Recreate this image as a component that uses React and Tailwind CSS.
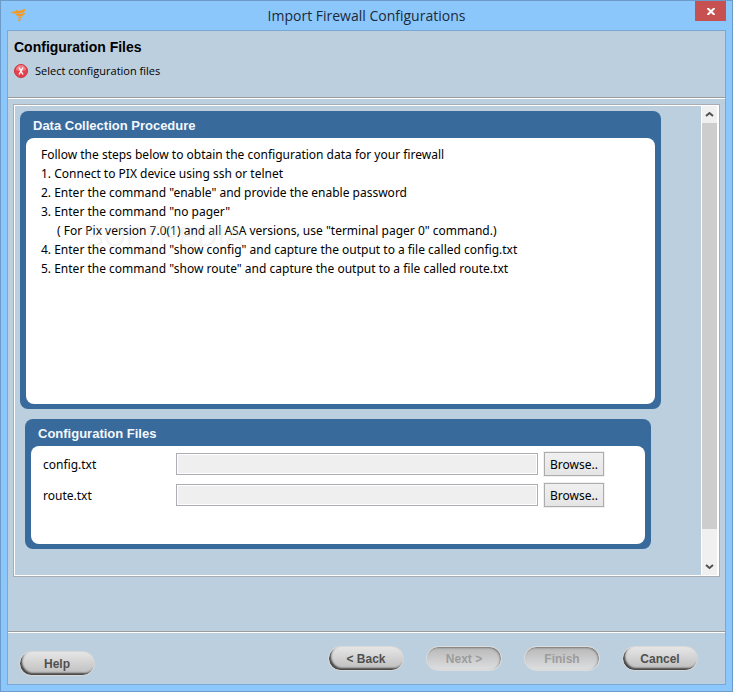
import { useState } from 'react'

const STEPS = [
    'Follow the steps below to obtain the configuration data for your firewall',
    '1. Connect to PIX device using ssh or telnet',
    '2. Enter the command "enable" and provide the enable password',
    '3. Enter the command "no pager"',
    '( For Pix version 7.0(1) and all ASA versions, use "terminal pager 0" command.)',
    '4. Enter the command "show config" and capture the output to a file called config.txt',
    '5. Enter the command "show route" and capture the output to a file called route.txt',
]

const FILES = ['config.txt', 'route.txt']

const Logo = () => (
    <svg width="16" height="13" viewBox="0 0 16 13" fill="#f7991c" className="mt-2 ml-[3px]">
        <path d="M0 3 L4 2.5 L6 2 L5 0.5 L9 2 L15 0 L15 2 L13 3.5 L9 4.5 L4 4.5 Z" />
        <path d="M5 5 L10 5 L15 4 L15 5 L12 7 L8 7.5 Z" />
        <path d="M8 8 L13 7.5 L11 9 L9 9.3 Z" />
        <path d="M9 9.8 L11 9.6 L10.5 11 L9 12.5 L8 12 Z" />
    </svg>
)

const ErrorIcon = () => (
    <svg width="14" height="14" viewBox="0 0 14 14">
        <circle cx="7" cy="7" r="6.5" fill="#e3404d" stroke="#cf3340" />
        <path d="M2 6 A5 5 0 0 1 12 6 Q7 8 2 6 Z" fill="#f07e86" />
        <path d="M5 3.5 L9 10.5 M9 3.5 L5 10.5" stroke="#fff" strokeWidth="1.4" fill="none" />
    </svg>
)

const Panel = ({ title, className, children }) => (
    <section className={`flex flex-col rounded-lg bg-[#386a9c] px-[6px] pb-[5px] ${className}`}>
        <h2 className="h-[27px] pt-px pl-[7px] font-['Liberation_Sans',sans-serif] text-[13px]/7 font-bold text-[#f4f8fc]">{title}</h2>
        <div className="grow rounded-lg bg-white">{children}</div>
    </section>
)

const PillButton = ({ children, disabled, className = '' }) => (
    <button
        type="button"
        disabled={disabled}
        className={`h-[25px] w-[76px] rounded-full border font-['Liberation_Sans',sans-serif] text-xs font-bold ${disabled
            ? 'border-[#dedede] bg-linear-to-b from-[#b8b8b8] to-[#dedfe1] text-[#9c9c9c] shadow-[inset_-1px_1px_2px_#777]'
            : 'border-[#d8d8d8] bg-linear-to-b from-[#e6e6e6] to-[#bdbdbd] text-[#505050] shadow-[inset_2px_-2px_2px_#444]'} ${className}`}
    >
        {children}
    </button>
)

const Chevron = ({ d }) => (
    <svg width="9" height="7" viewBox="0 0 9 7" fill="none" stroke="#505050" strokeWidth="2">
        <path d={d} />
    </svg>
)

const App = () => {
    const [paths] = useState({ 'config.txt': '', 'route.txt': '' })

    return (
        <div className="flex min-h-screen flex-col border border-[#6c9bc9] bg-[#8bc7fb] px-[6px] pb-[6px] font-['Noto_Sans',sans-serif] text-xs text-black">
            <header className="grid h-[29px] grid-cols-[46px_1fr_31px]">
                <Logo />
                <h1 className="pr-[15px] text-center font-['Open_Sans',sans-serif] text-sm/[30px] text-[#1c2a3a]">Import Firewall Configurations</h1>
                <button type="button" aria-label="Close" className="flex h-5 items-center justify-center bg-[#c75050]">
                    <svg width="8" height="7" viewBox="0 0 8 7" stroke="#fff" strokeWidth="2">
                        <path d="M0.5 0 L7.5 7 M7.5 0 L0.5 7" />
                    </svg>
                </button>
            </header>

            <main className="flex grow flex-col border border-[#79a8d5] bg-[#bccfde]">
                <div className="flex h-[67px] flex-col border-b border-[#9c9c9c] pt-2 pl-[6px]">
                    <h2 className="font-['Liberation_Sans',sans-serif] text-sm/4 font-bold">Configuration Files</h2>
                    <p className="mt-2 flex items-center gap-[7px] font-['Open_Sans',sans-serif] text-[11px]/4"><ErrorIcon />Select configuration files</p>
                </div>

                <div className="flex grow flex-col border-t border-white px-[5px] pt-[5px]">
                    <div className="flex h-[473px] border border-[#a9acb3]">
                        <div className="flex grow border border-white">
                            <div className="grow pt-[5px] pr-[40px] pl-[5px]">
                                <Panel title="Data Collection Procedure" className="h-[298px]">
                                    <div className="relative pt-[7px] pl-[15px] text-xs/[19px]">
                                        {STEPS.map((step) => (
                                            <p key={step} className={step.startsWith('(') ? 'pl-4' : ''}>{step}</p>
                                        ))}
                                        <span aria-hidden="true" className="pointer-events-none absolute top-[84px] left-[58px] font-['Liberation_Sans',sans-serif] text-[28px]/[28px] text-white/30 [text-shadow:1px_1px_1px_rgba(0,0,0,0.06)]">SOFTPEDIA</span>
                                    </div>
                                </Panel>
                                <Panel title="Configuration Files" className="mt-[10px] mr-[10px] ml-[5px] h-[130px]">
                                    <div className="flex flex-col gap-[7px] pt-[6px] pr-[41px] pl-3">
                                        {FILES.map((name) => (
                                            <div key={name} className="flex items-center">
                                                <label htmlFor={name} className="w-[133px] pt-[2px]">{name}</label>
                                                <input id={name} readOnly value={paths[name]} className="h-[22px] min-w-0 grow border border-[#abadb3] bg-[#efefef] shadow-[inset_0_0_0_1px_#fff]" />
                                                <button type="button" className="ml-[6px] h-6 w-[60px] border border-[#acacac] bg-linear-to-b from-[#f0f0f0] to-[#e5e5e5] pt-[2px] whitespace-nowrap shadow-[0_0_0_1px_#f0f0f0]">Browse..</button>
                                            </div>
                                        ))}
                                    </div>
                                </Panel>
                            </div>
                            <div className="flex w-[17px] flex-col items-center border-x border-white bg-[#f0f0f0]">
                                <div className="flex h-[17px] items-center"><Chevron d="M1 5 L4.5 2 L8 5" /></div>
                                <div className="h-[406px] w-full bg-[#cdcdcd]" />
                                <div className="mt-auto flex h-[17px] items-center"><Chevron d="M1 2 L4.5 5 L8 2" /></div>
                            </div>
                        </div>
                    </div>
                </div>

                <footer className="border-t border-[#9c9c9c]">
                    <div className="flex h-[52px] items-start border-t border-white pt-[13px] pr-[27px] pl-[11px]">
                        <PillButton className="mt-[5px] mr-auto">Help</PillButton>
                        <div className="flex gap-[22px]">
                            <PillButton>&lt; Back</PillButton>
                            <PillButton disabled>Next &gt;</PillButton>
                            <PillButton disabled>Finish</PillButton>
                            <PillButton>Cancel</PillButton>
                        </div>
                    </div>
                </footer>
            </main>
        </div>
    )
}

export default App
